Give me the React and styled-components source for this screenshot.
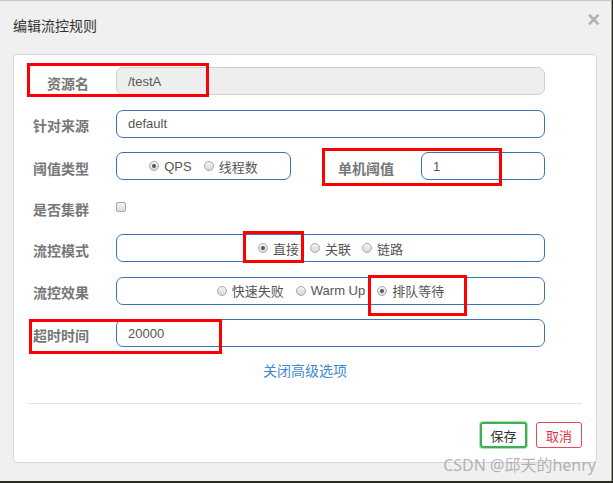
import styled, { createGlobalStyle } from 'styled-components';

const GlobalStyle = createGlobalStyle`
  html, body {
    margin: 0;
    padding: 0;
    background: #2b2b22;
  }
  * {
    box-sizing: border-box;
  }
`;

const CN = `"Liberation Sans", "Noto Sans CJK SC", sans-serif`;

const modeOptions = [
  { label: '直接', checked: true },
  { label: '关联' },
  { label: '链路' },
];

const effectOptions = [
  { label: '快速失败' },
  { label: 'Warm Up' },
  { label: '排队等待', checked: true },
];

const marks = [
  { x: 27, y: 63, w: 182, h: 34 },
  { x: 322, y: 148, w: 180, h: 38 },
  { x: 243, y: 231, w: 61, h: 32 },
  { x: 368, y: 275, w: 99, h: 41 },
  { x: 29, y: 319, w: 193, h: 35 },
];

const Radio = ({ label, checked }) => (
  <StyledOption>
    <StyledDot $checked={checked} />
    {label}
  </StyledOption>
);

const App = () => {
  return (
    <>
      <GlobalStyle />
      <StyledModal>
        <StyledHeader>
          <StyledTitle>编辑流控规则</StyledTitle>
          <StyledClose>×</StyledClose>
        </StyledHeader>
        <StyledPanel>
          <StyledRow>
            <StyledLabel>资源名</StyledLabel>
            <StyledInput $disabled>/testA</StyledInput>
          </StyledRow>
          <StyledRow>
            <StyledLabel>针对来源</StyledLabel>
            <StyledInput>default</StyledInput>
          </StyledRow>
          <StyledRow>
            <StyledLabel>阈值类型</StyledLabel>
            <StyledSplit>
              <StyledRadioBox $width="175px" $gap="12px">
                <Radio label="QPS" checked />
                <Radio label="线程数" />
              </StyledRadioBox>
              <StyledSubLabel>单机阈值</StyledSubLabel>
              <StyledInput $width="124px">1</StyledInput>
            </StyledSplit>
          </StyledRow>
          <StyledRow $short>
            <StyledLabel>是否集群</StyledLabel>
            <StyledCheck />
          </StyledRow>
          <StyledRow>
            <StyledLabel>流控模式</StyledLabel>
            <StyledRadioBox $gap="11px">
              {modeOptions.map((o) => (
                <Radio key={o.label} label={o.label} checked={o.checked} />
              ))}
            </StyledRadioBox>
          </StyledRow>
          <StyledRow>
            <StyledLabel>流控效果</StyledLabel>
            <StyledRadioBox $gap="12px">
              {effectOptions.map((o) => (
                <Radio key={o.label} label={o.label} checked={o.checked} />
              ))}
            </StyledRadioBox>
          </StyledRow>
          <StyledRow>
            <StyledLabel>超时时间</StyledLabel>
            <StyledInput>20000</StyledInput>
          </StyledRow>
          <StyledLink>关闭高级选项</StyledLink>
          <StyledDivider />
          <StyledFooter>
            <StyledButton $tone="save">保存</StyledButton>
            <StyledButton $tone="cancel">取消</StyledButton>
          </StyledFooter>
        </StyledPanel>
        {marks.map((m, i) => (
          <StyledMark key={i} $x={m.x} $y={m.y} $w={m.w} $h={m.h} />
        ))}
        <StyledWatermark>CSDN @邱天的henry</StyledWatermark>
      </StyledModal>
    </>
  );
};

const StyledModal = styled.div`
  position: relative;
  width: 612px;
  height: 481px;
  background: #f0f0f0;
  border-top: 1px solid #c6c6c6;
  border-right: 1px solid #9a9a9a;
  font-family: ${CN};
`;

const StyledHeader = styled.div`
  display: flex;
  justify-content: space-between;
  align-items: flex-start;
  height: 53px;
  padding: 17px 11px 0 13px;
`;

const StyledTitle = styled.div`
  font-size: 14px;
  line-height: 16px;
  color: #333;
`;

const StyledClose = styled.div`
  margin-top: -11px;
  font-family: "Liberation Sans", sans-serif;
  font-size: 22px;
  font-weight: bold;
  color: #b0b0b0;
`;

const StyledPanel = styled.div`
  margin-left: 13px;
  width: 584px;
  height: 409px;
  background: #fff;
  border: 1px solid #d6d6d6;
  border-radius: 4px;
  padding: 12px 14px 0 14px;
`;

const StyledRow = styled.div`
  display: grid;
  grid-template-columns: 61px 429px;
  column-gap: 27px;
  align-items: center;
  height: ${(p) => (p.$short ? '25px' : '28px')};
  margin-bottom: 14.5px;
`;

const StyledLabel = styled.div`
  text-align: right;
  white-space: nowrap;
  font-size: 14px;
  font-weight: bold;
  color: #777;
  padding-top: 3px;
`;

const StyledSubLabel = styled(StyledLabel)`
  width: 61px;
  margin-left: auto;
  margin-right: 27px;
`;

const StyledInput = styled.div`
  width: ${(p) => p.$width || '100%'};
  height: 28px;
  display: flex;
  align-items: center;
  padding-left: 11px;
  border: 1px solid ${(p) => (p.$disabled ? '#cfcfcf' : '#3a75b0')};
  background: ${(p) => (p.$disabled ? '#eeeeee' : '#fff')};
  border-radius: 7px;
  font-size: 13px;
  color: #555;
`;

const StyledSplit = styled.div`
  display: flex;
  align-items: center;
`;

const StyledRadioBox = styled.div`
  width: ${(p) => p.$width || '100%'};
  height: 28px;
  display: flex;
  justify-content: center;
  align-items: center;
  gap: ${(p) => p.$gap};
  border: 1px solid #3a75b0;
  border-radius: 7px;
`;

const StyledOption = styled.span`
  display: inline-flex;
  align-items: center;
  gap: 5px;
  font-size: 13px;
  color: #555;
`;

const StyledDot = styled.span`
  position: relative;
  width: 10px;
  height: 10px;
  border-radius: 50%;
  border: 1px solid #a9a9a9;
  background: linear-gradient(#f4f4f4, #d8d8d8);
  &::after {
    content: '';
    display: ${(p) => (p.$checked ? 'block' : 'none')};
    position: absolute;
    left: 2px;
    top: 2px;
    width: 4px;
    height: 4px;
    border-radius: 50%;
    background: #555;
  }
`;

const StyledCheck = styled.span`
  width: 10px;
  height: 10px;
  border: 1px solid #a5a5a5;
  border-radius: 2px;
  background: linear-gradient(#f6f6f6, #dcdcdc);
`;

const StyledLink = styled.div`
  margin-top: -0.5px;
  text-align: center;
  font-size: 14px;
  line-height: 20px;
  color: #3f88d0;
`;

const StyledDivider = styled.div`
  margin-top: 22px;
  height: 1px;
  background: #e3e3e3;
`;

const StyledFooter = styled.div`
  display: flex;
  justify-content: flex-end;
  gap: 9px;
  padding-top: 18px;
`;

const StyledButton = styled.button`
  width: ${(p) => (p.$tone === 'save' ? '47px' : '46px')};
  height: 26px;
  padding: 0;
  background: #fff;
  border-radius: 3px;
  font-family: ${CN};
  font-size: 13px;
  border: ${(p) => (p.$tone === 'save' ? '2px solid #3fae55' : '1px solid #e04b58')};
  box-shadow: ${(p) => (p.$tone === 'save' ? '0 0 0 1px rgba(92, 184, 92, 0.45)' : 'none')};
  color: ${(p) => (p.$tone === 'save' ? '#333' : '#e0303f')};
`;

const StyledMark = styled.div`
  position: absolute;
  left: ${(p) => p.$x}px;
  top: ${(p) => p.$y - 1}px;
  width: ${(p) => p.$w}px;
  height: ${(p) => p.$h}px;
  border: 3px solid #ff0000;
  pointer-events: none;
`;

const StyledWatermark = styled.div`
  position: absolute;
  right: 15px;
  top: 453px;
  font-family: "Noto Sans", "Noto Sans CJK SC", sans-serif;
  font-size: 16px;
  line-height: 22px;
  color: rgba(150, 150, 150, 0.7);
  white-space: nowrap;
`;

export default App;
